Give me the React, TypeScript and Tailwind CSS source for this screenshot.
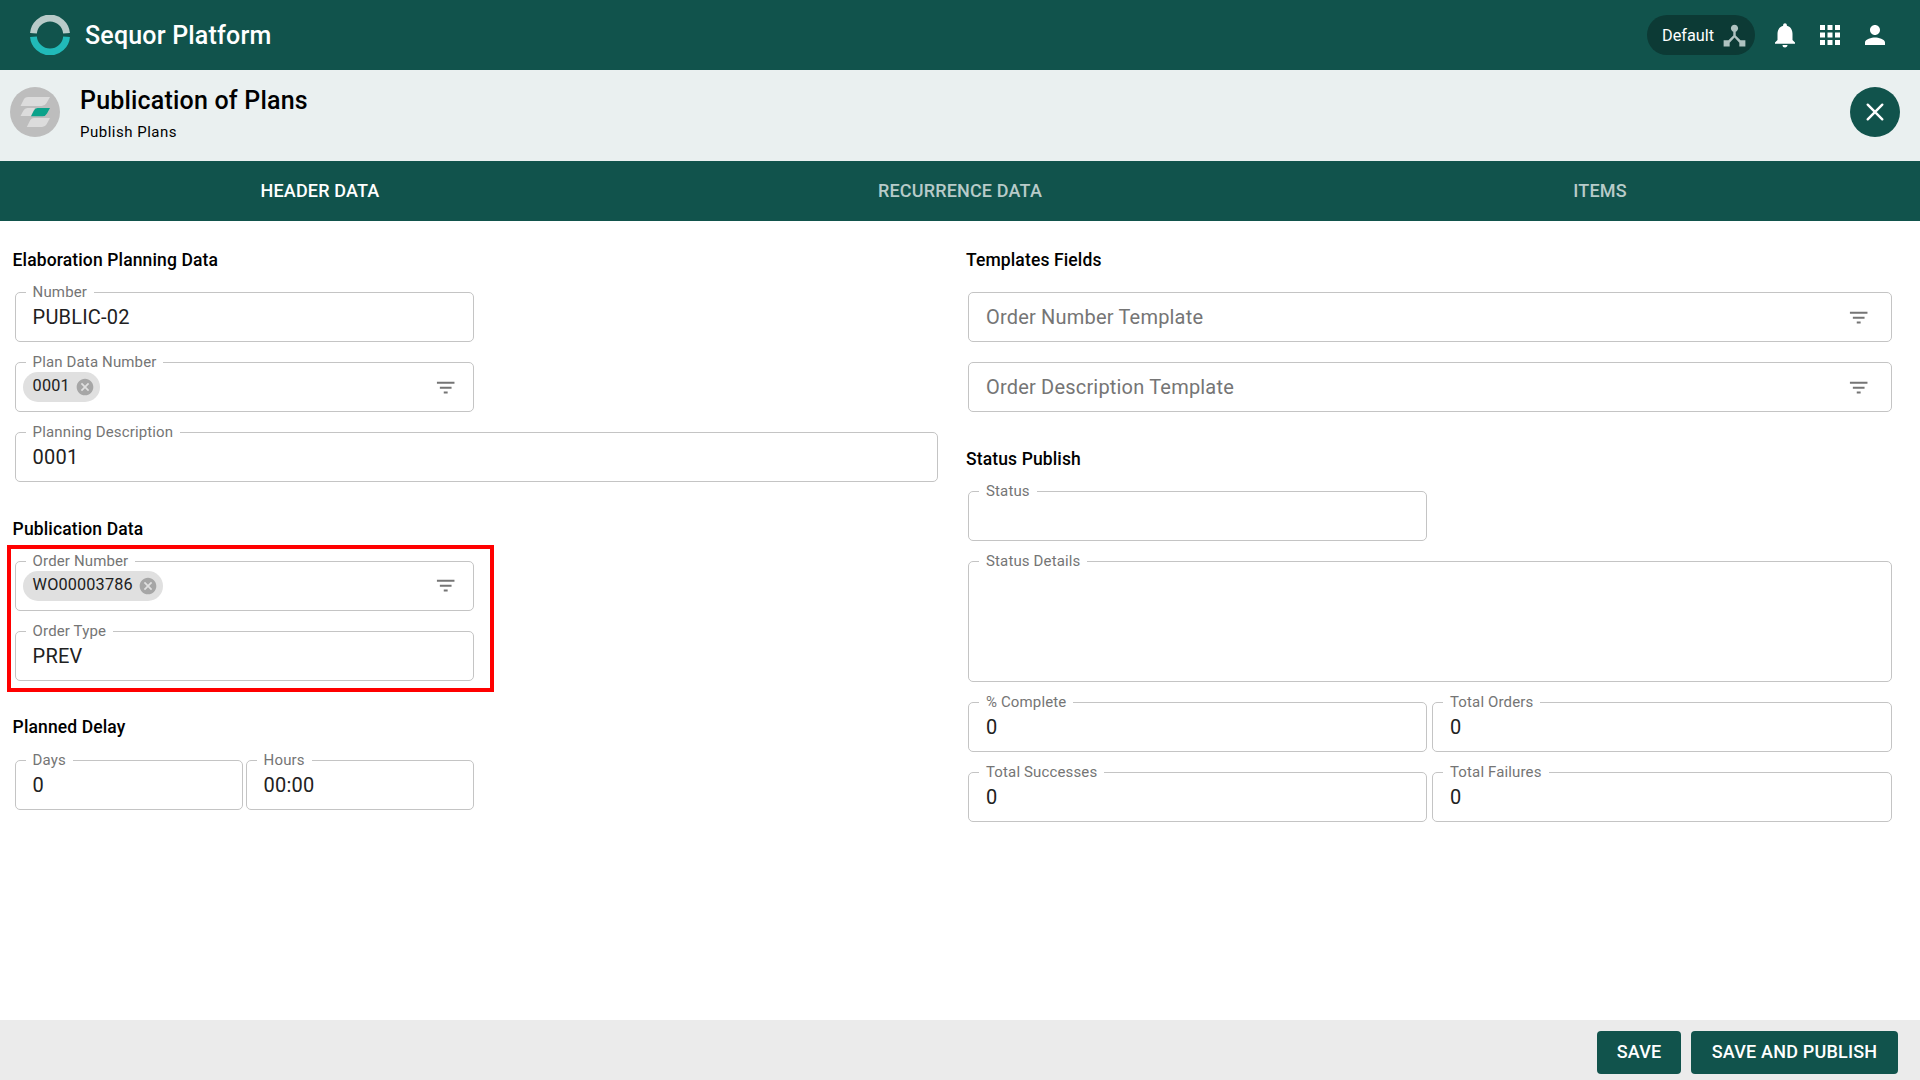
import React from "react";
import { MdApps, MdCancel, MdDeviceHub, MdFilterList, MdNotifications, MdPerson } from "react-icons/md";
import clsx from "clsx";

interface FieldProps {
	label?: string;
	value?: string;
	placeholder?: string;
	chip?: string;
	filter?: boolean;
	className?: string;
}

const SequorLogo: React.FC = () => (
	<svg width="40" height="40" viewBox="0 0 40 40" fill="none" strokeWidth="6.8">
		<path d="M3.45 18.3a16.6 16.6 0 0 1 33.1 0" stroke="#b8cbc9" />
		<path d="M3.45 21.7a16.6 16.6 0 0 0 33.1 0" stroke="#21bab9" />
	</svg>
);

const PlanLogo: React.FC = () => (
	<svg width="50" height="50" viewBox="0 0 50 50">
		<circle cx="25" cy="25" r="25" fill="#bdbdbd" />
		<path d="M16 10h24l-3.6 6.2q-1.6 2.8-4.8 2.8H10.500l3-6q1.200-3 4.500-3z" fill="#dcdcdc" />
		<path d="M17.500 21h7.500l-4 8H10.500l2.800-5.200q1.400-2.800 4.200-2.800z" fill="#dcdcdc" />
		<path d="M27.500 21h12.500l-3 5.400q-1.500 2.800-4.500 2.800H21l2.800-5.400q1.300-2.800 3.700-2.800z" fill="#0aa28a" />
		<path d="M24 31h16l-3.400 6.200q-1.500 2.800-4.600 2.800H16.800l3-6q1.300-3 4.200-3z" fill="#dcdcdc" />
	</svg>
);

const Field: React.FC<FieldProps> = ({ label, value, placeholder, chip, filter, className }) => (
	<div className={clsx("relative flex items-center rounded-[5px] border border-[#c4c4c4]", className ?? "h-[50px] w-full")}>
		{label && (
			<span className="absolute -top-[9px] left-[10px] bg-white px-[7px] text-[15px] leading-4 tracking-[0.14px] text-[#757575] whitespace-nowrap">
				{label}
			</span>
		)}
		{value && <span className="pl-[17px] text-[20px] leading-7 tracking-[0.19px] text-[#212121]">{value}</span>}
		{placeholder && (
			<span className="pl-[17px] text-[20px] leading-7 tracking-[0.19px] text-[#757575]">{placeholder}</span>
		)}
		{chip && (
			<span className="relative ml-[7px] flex h-[30px] items-center rounded-full bg-[#e0e0e0] pl-[10px] pr-[5px]">
				<span className="-mt-[2px] text-[16.25px] leading-5 tracking-[0.15px] text-[#212121]">{chip}</span>
				<MdCancel className="ml-[5.5px] size-5 text-[#a6a6a6]" />
			</span>
		)}
		{filter && <MdFilterList className="ml-auto mr-[15.5px] mt-px size-[23.4px] text-[#757575]" />}
	</div>
);

const SectionTitle: React.FC<{ children: React.ReactNode; className?: string }> = ({ children, className }) => (
	<h2 className={clsx("pl-[12.6px] text-[17.5px] leading-6 font-medium tracking-[0.125px] text-black", className)}>
		{children}
	</h2>
);

const TopBar: React.FC = () => (
	<header className="flex h-[70px] shrink-0 items-center bg-[#11534c] px-[30px] text-white">
		<SequorLogo />
		<h1 className="ml-[15px] mt-[2px] text-[25px] leading-8 font-medium tracking-[0.19px]">Sequor Platform</h1>
		<div className="ml-auto flex items-center gap-[15px]">
			<button type="button" className="flex h-10 w-[108px] items-center rounded-full bg-[#0c3a35] pl-[15px]">
				<span className="mt-px text-[16.25px] leading-6">Default</span>
				<MdDeviceHub className="ml-auto mr-[6px] size-[29px] text-[#afc2c0]" />
			</button>
			<MdNotifications className="size-[30px]" />
			<MdApps className="size-[30px]" />
			<MdPerson className="size-[30px]" />
		</div>
	</header>
);

const PageHeader: React.FC = () => (
	<section className="flex h-[91px] shrink-0 items-start bg-[#eaf0f0] pl-[10px] pr-5 pt-[17px]">
		<PlanLogo />
		<div className="ml-5 -mt-[3px]">
			<h2 className="text-[25px] leading-[34px] font-medium tracking-[0.19px] text-black">Publication of Plans</h2>
			<p className="mt-[2px] text-[15px] leading-[25px] tracking-[0.5px] text-black">Publish Plans</p>
		</div>
		<button type="button" className="ml-auto grid size-[50px] place-items-center rounded-full bg-[#11534c]">
			<svg width="18" height="18" viewBox="0 0 18 18" stroke="#fff" strokeWidth="2.4" strokeLinecap="round">
				<path d="M1.700 1.700l14.600 14.600M16.300 1.700L1.700 16.300" />
			</svg>
		</button>
	</section>
);

const Tabs: React.FC = () => (
	<nav className="grid h-[60px] shrink-0 grid-cols-3 bg-[#11534c] pb-[2px] text-[18px] font-medium tracking-[0.17px]">
		<button type="button" className="text-white">
			HEADER DATA
		</button>
		<button type="button" className="text-[#b8cbc9]">
			RECURRENCE DATA
		</button>
		<button type="button" className="text-[#b8cbc9]">
			ITEMS
		</button>
	</nav>
);

const HeaderForm: React.FC = () => (
	<div className="w-[938px]">
		<SectionTitle>Elaboration Planning Data</SectionTitle>
		<div className="mt-5 flex flex-col gap-5 pl-[14.6px]">
			<Field label="Number" value="PUBLIC-02" className="h-[50px] w-[459px]" />
			<Field label="Plan Data Number" chip="0001" filter className="h-[50px] w-[459px]" />
			<Field label="Planning Description" value="0001" />
		</div>

		<SectionTitle className="mt-[35px]">Publication Data</SectionTitle>
		<div className="relative mt-5 flex flex-col gap-5 pl-[14.6px]">
			<Field label="Order Number" chip="WO00003786" filter className="h-[50px] w-[459px] pb-px" />
			<Field label="Order Type" value="PREV" className="h-[50px] w-[459px]" />
			<div className="absolute -top-4 left-[7px] h-[147px] w-[487px] border-4 border-[#ff0000]" />
		</div>

		<SectionTitle className="mt-[34px]">Planned Delay</SectionTitle>
		<div className="mt-[21px] flex gap-[3px] pl-[14.6px]">
			<Field label="Days" value="0" className="h-[50px] w-[228px]" />
			<Field label="Hours" value="00:00" className="h-[50px] w-[228px]" />
		</div>
	</div>
);

const StatusForm: React.FC = () => (
	<div className="ml-[15.4px] w-[939px]">
		<SectionTitle>Templates Fields</SectionTitle>
		<div className="mt-5 flex flex-col gap-5 pl-[14.6px]">
			<Field placeholder="Order Number Template" filter className="h-[50px] w-[924px] pr-[5.2px]" />
			<Field placeholder="Order Description Template" filter className="h-[50px] w-[924px] pr-[5.2px]" />
		</div>

		<SectionTitle className="mt-[35px]">Status Publish</SectionTitle>
		<div className="mt-5 flex flex-col gap-5 pl-[14.6px]">
			<Field label="Status" className="h-[50px] w-[459px]" />
			<Field label="Status Details" className="h-[121px] w-[924px]" />
			<div className="flex w-[924px] gap-[5px]">
				<Field label="% Complete" value="0" className="h-[50px] w-[459px]" />
				<Field label="Total Orders" value="0" className="h-[50px] w-[460px]" />
			</div>
			<div className="flex w-[924px] gap-[5px]">
				<Field label="Total Successes" value="0" className="h-[50px] w-[459px]" />
				<Field label="Total Failures" value="0" className="h-[50px] w-[460px]" />
			</div>
		</div>
	</div>
);

const Footer: React.FC = () => (
	<footer className="flex h-[60px] shrink-0 items-start justify-end gap-[10px] bg-[#ebebeb] pr-[22px] pt-[11px] text-[18px] font-medium tracking-[0.19px] text-white">
		<button type="button" className="h-[43px] w-[84px] rounded-[4px] bg-[#11534c] pb-[2px]">
			SAVE
		</button>
		<button type="button" className="h-[43px] w-[207px] rounded-[4px] bg-[#11534c] pb-[2px]">
			SAVE AND PUBLISH
		</button>
	</footer>
);

export default function App() {
	return (
		<div className="flex h-screen w-full flex-col overflow-hidden bg-white font-['Roboto',sans-serif]">
			<TopBar />
			<PageHeader />
			<Tabs />
			<main className="flex flex-1 pt-[27px]">
				<HeaderForm />
				<StatusForm />
			</main>
			<Footer />
		</div>
	);
}
